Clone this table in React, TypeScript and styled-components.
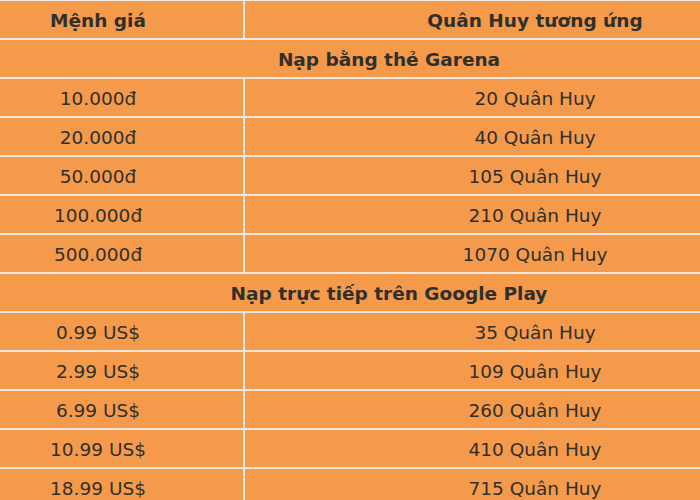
import React from "react";
import styled, { createGlobalStyle } from "styled-components";

const Global = createGlobalStyle`
  html, body { margin: 0; padding: 0; background: #ffffff; overflow: hidden; }
  body { font-family: "DejaVu Sans", Verdana, sans-serif; }
`;

const Wrap = styled.div`
  width: 700px;
  height: 500px;
  overflow: hidden;
  background: #f59a4b;
`;

const Table = styled.table`
  margin-left: -47px;
  width: 872px;
  border-collapse: separate;
  border-spacing: 0;
  background: #f59a4b;
  color: #2f302c;
  font-size: 18.5px;
  table-layout: fixed;
  border-top: 1px solid #f3ece6;
`;

const Cell = styled.td<{ $bold?: boolean; $first?: boolean }>`
  box-sizing: border-box;
  height: 39px;
  padding: 2px 0 0 0;
  text-align: center;
  vertical-align: middle;
  font-weight: ${(p) => (p.$bold ? 700 : 400)};
  border-bottom: 2px solid #ece6e0;
  border-right: ${(p) => (p.$first ? "2px solid #ece6e0" : "none")};
  line-height: 35px;
  white-space: nowrap;
`;

const HeadCell = styled(Cell).attrs({ as: "th" })``;

type Row = [string, string];

const garena: Row[] = [
  ["10.000đ", "20 Quân Huy"],
  ["20.000đ", "40 Quân Huy"],
  ["50.000đ", "105 Quân Huy"],
  ["100.000đ", "210 Quân Huy"],
  ["500.000đ", "1070 Quân Huy"],
];

const google: Row[] = [
  ["0.99 US$", "35 Quân Huy"],
  ["2.99 US$", "109 Quân Huy"],
  ["6.99 US$", "260 Quân Huy"],
  ["10.99 US$", "410 Quân Huy"],
  ["18.99 US$", "715 Quân Huy"],
];

const DataRows = ({ rows }: { rows: Row[] }) => (
  <>
    {rows.map(([a, b]) => (
      <tr key={a}>
        <Cell $first>{a}</Cell>
        <Cell>{b}</Cell>
      </tr>
    ))}
  </>
);

export default function App() {
  return (
    <Wrap>
      <Global />
      <Table>
        <colgroup>
          <col style={{ width: 292 }} />
          <col style={{ width: 580 }} />
        </colgroup>
        <thead>
          <tr>
            <HeadCell $bold $first>Mệnh giá</HeadCell>
            <HeadCell $bold>Quân Huy tương ứng</HeadCell>
          </tr>
        </thead>
        <tbody>
          <tr>
            <Cell $bold colSpan={2}>Nạp bằng thẻ Garena</Cell>
          </tr>
          <DataRows rows={garena} />
          <tr>
            <Cell $bold colSpan={2}>Nạp trực tiếp trên Google Play</Cell>
          </tr>
          <DataRows rows={google} />
        </tbody>
      </Table>
    </Wrap>
  );
}
